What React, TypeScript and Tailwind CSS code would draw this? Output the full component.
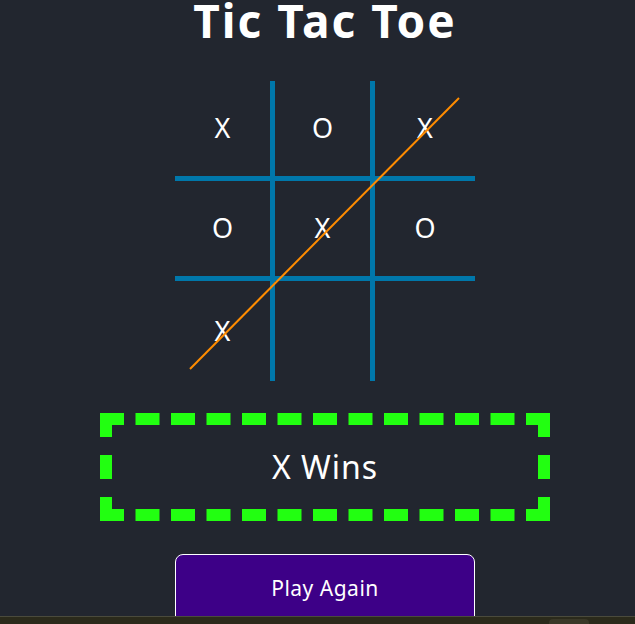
import React from 'react';

const board = ['X', 'O', 'X', 'O', 'X', 'O', 'X', '', ''];

const cellBorder = [
  'border-r-[5px] border-b-[5px]',
  'border-r-[5px] border-b-[5px]',
  'border-b-[5px]',
  'border-r-[5px] border-b-[5px]',
  'border-r-[5px] border-b-[5px]',
  'border-b-[5px]',
  'border-r-[5px]',
  'border-r-[5px]',
  '',
];

export default function App() {
  return (
    <div
      className="min-h-screen bg-[#22262f] text-white flex flex-col items-center overflow-hidden pl-[15px]"
      style={{ fontFamily: '"Noto Sans", "DejaVu Sans", sans-serif' }}
    >
      <h1 className="text-[46px] font-bold leading-[40px] tracking-[2px]">Tic Tac Toe</h1>

      {/* Board */}
      <div className="relative mt-[41px] grid grid-cols-3 w-[300px]">
        {board.map((v, i) => (
          <div
            key={i}
            className={`h-[100px] flex items-center justify-center border-[#0077aa] text-[27px] ${cellBorder[i]}`}
          >
            {v}
          </div>
        ))}
        <svg className="absolute inset-0 pointer-events-none" width="300" height="300" viewBox="0 0 300 300">
          <line x1="15" y1="288" x2="284" y2="17" stroke="#ff8c00" strokeWidth="2" />
        </svg>
      </div>

      {/* Result */}
      <div className="mt-[32px] w-[450px] h-[108px] border-[12px] border-dashed border-[#22ff11] flex items-center justify-center">
        <span className="text-[32px] tracking-[1px]">X Wins</span>
      </div>

      {/* Play again */}
      <button className="mt-[33px] w-[300px] h-[70px] shrink-0 bg-[#3d0087] border border-white rounded-[8px] text-white text-[21px] tracking-[0.5px]">
        Play Again
      </button>

      {/* bottom strip */}
      <div className="fixed left-0 right-0 bottom-0 h-[8px] bg-[#2b2a1b] border-t border-[#4a4a3c]">
        <div className="absolute left-[549px] top-[2px] w-[40px] h-[10px] rounded-t-[4px] bg-[#3a3828]" />
      </div>
    </div>
  );
}
